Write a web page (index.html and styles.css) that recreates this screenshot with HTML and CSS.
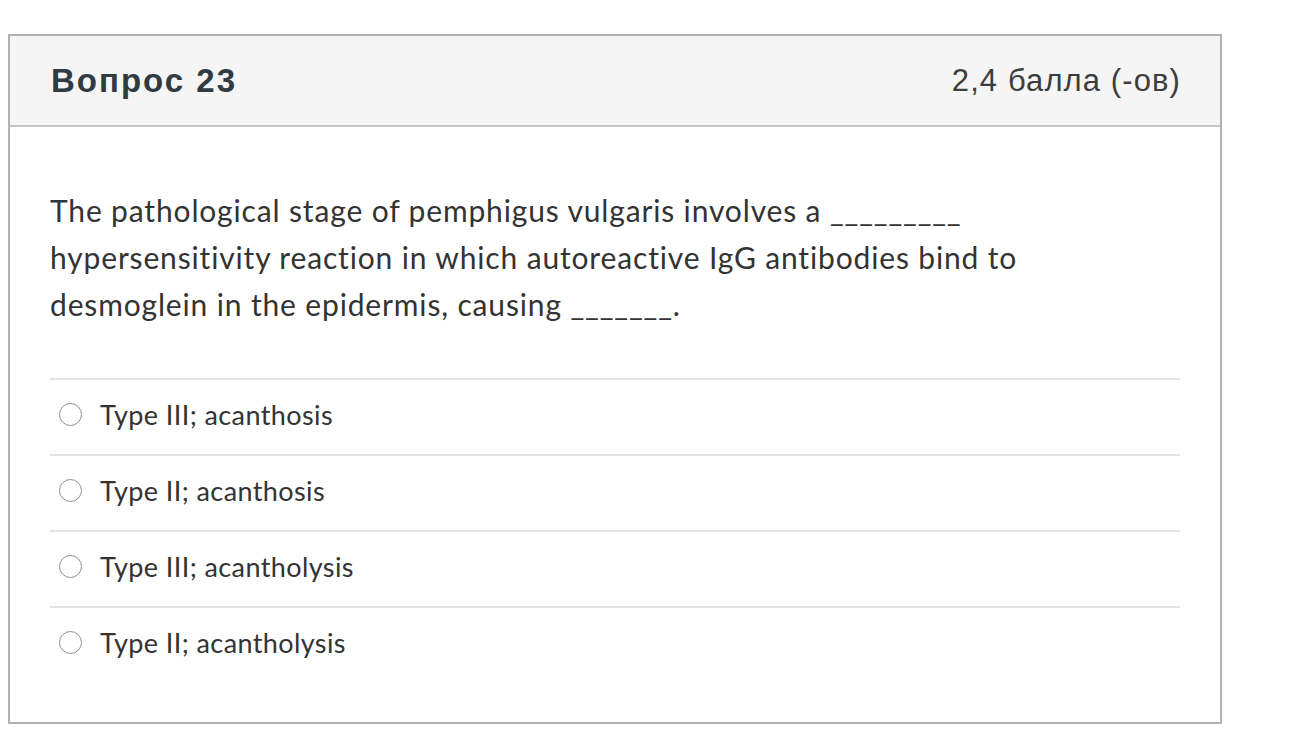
FILE: index.html
```html
<!DOCTYPE html>
<html lang="ru">
<head>
<meta charset="utf-8">
<title>Вопрос 23</title>
<link rel="stylesheet" href="styles.css">
</head>
<body>
<div class="card">
  <div class="card-header">
    <h2 class="title">Вопрос 23</h2>
    <div class="points">2,4 балла (-ов)</div>
  </div>
  <div class="card-body">
    <p class="question">The pathological stage of pemphigus vulgaris involves a _________ hypersensitivity reaction in which autoreactive IgG antibodies bind to desmoglein in the epidermis, causing _______.</p>
    <div class="answers">
      <label class="answer"><span class="radio"></span><span class="answer-text">Type III; acanthosis</span></label>
      <label class="answer"><span class="radio"></span><span class="answer-text">Type II; acanthosis</span></label>
      <label class="answer"><span class="radio"></span><span class="answer-text">Type III; acantholysis</span></label>
      <label class="answer"><span class="radio"></span><span class="answer-text">Type II; acantholysis</span></label>
    </div>
  </div>
</div>
</body>
</html>
```
FILE: styles.css
```css
html, body {
  margin: 0;
  padding: 0;
  background: #ffffff;
}
body {
  font-family: Lato, "Liberation Sans", Arial, sans-serif;
  color: #333333;
}
.card {
  margin: 34px 0 0 8px;
  width: 1214px;
  box-sizing: border-box;
  border: 2px solid #b1b1b1;
}
.card-header {
  height: 91px;
  box-sizing: border-box;
  background: #f5f5f5;
  border-bottom: 2px solid #c4c4c4;
  display: flex;
  align-items: center;
  justify-content: space-between;
  padding: 0 40px 0 41px;
}
.title {
  margin: 0;
  font-family: "Liberation Sans", Arial, sans-serif;
  font-weight: bold;
  font-size: 33px;
  letter-spacing: 2px;
  color: #2f3a42;
}
.points {
  font-family: "Liberation Sans", Arial, sans-serif;
  font-size: 31px;
  letter-spacing: 1.1px;
  color: #3d3d3d;
  margin-right: -1px;
}
.card-body {
  padding: 60px 40px 40px 40px;
}
.question {
  margin: 0 40px 50px 0;
  font-size: 30px;
  letter-spacing: 0.85px;
  line-height: 47px;
  color: #333333;
}
.answers {
  display: flex;
  flex-direction: column;
}
.answer {
  display: flex;
  align-items: center;
  height: 76px;
  box-sizing: border-box;
  border-top: 2px solid #e4e4e4;
  padding-left: 9px;
  padding-bottom: 5px;
}
.radio {
  width: 21px;
  height: 21px;
  border: 1.5px solid #8e8e8e;
  border-radius: 50%;
  background: #fff;
  flex: none;
  margin-right: 18px;
}
.answer-text {
  font-size: 27px;
  letter-spacing: 0.4px;
  color: #333333;
}
```
